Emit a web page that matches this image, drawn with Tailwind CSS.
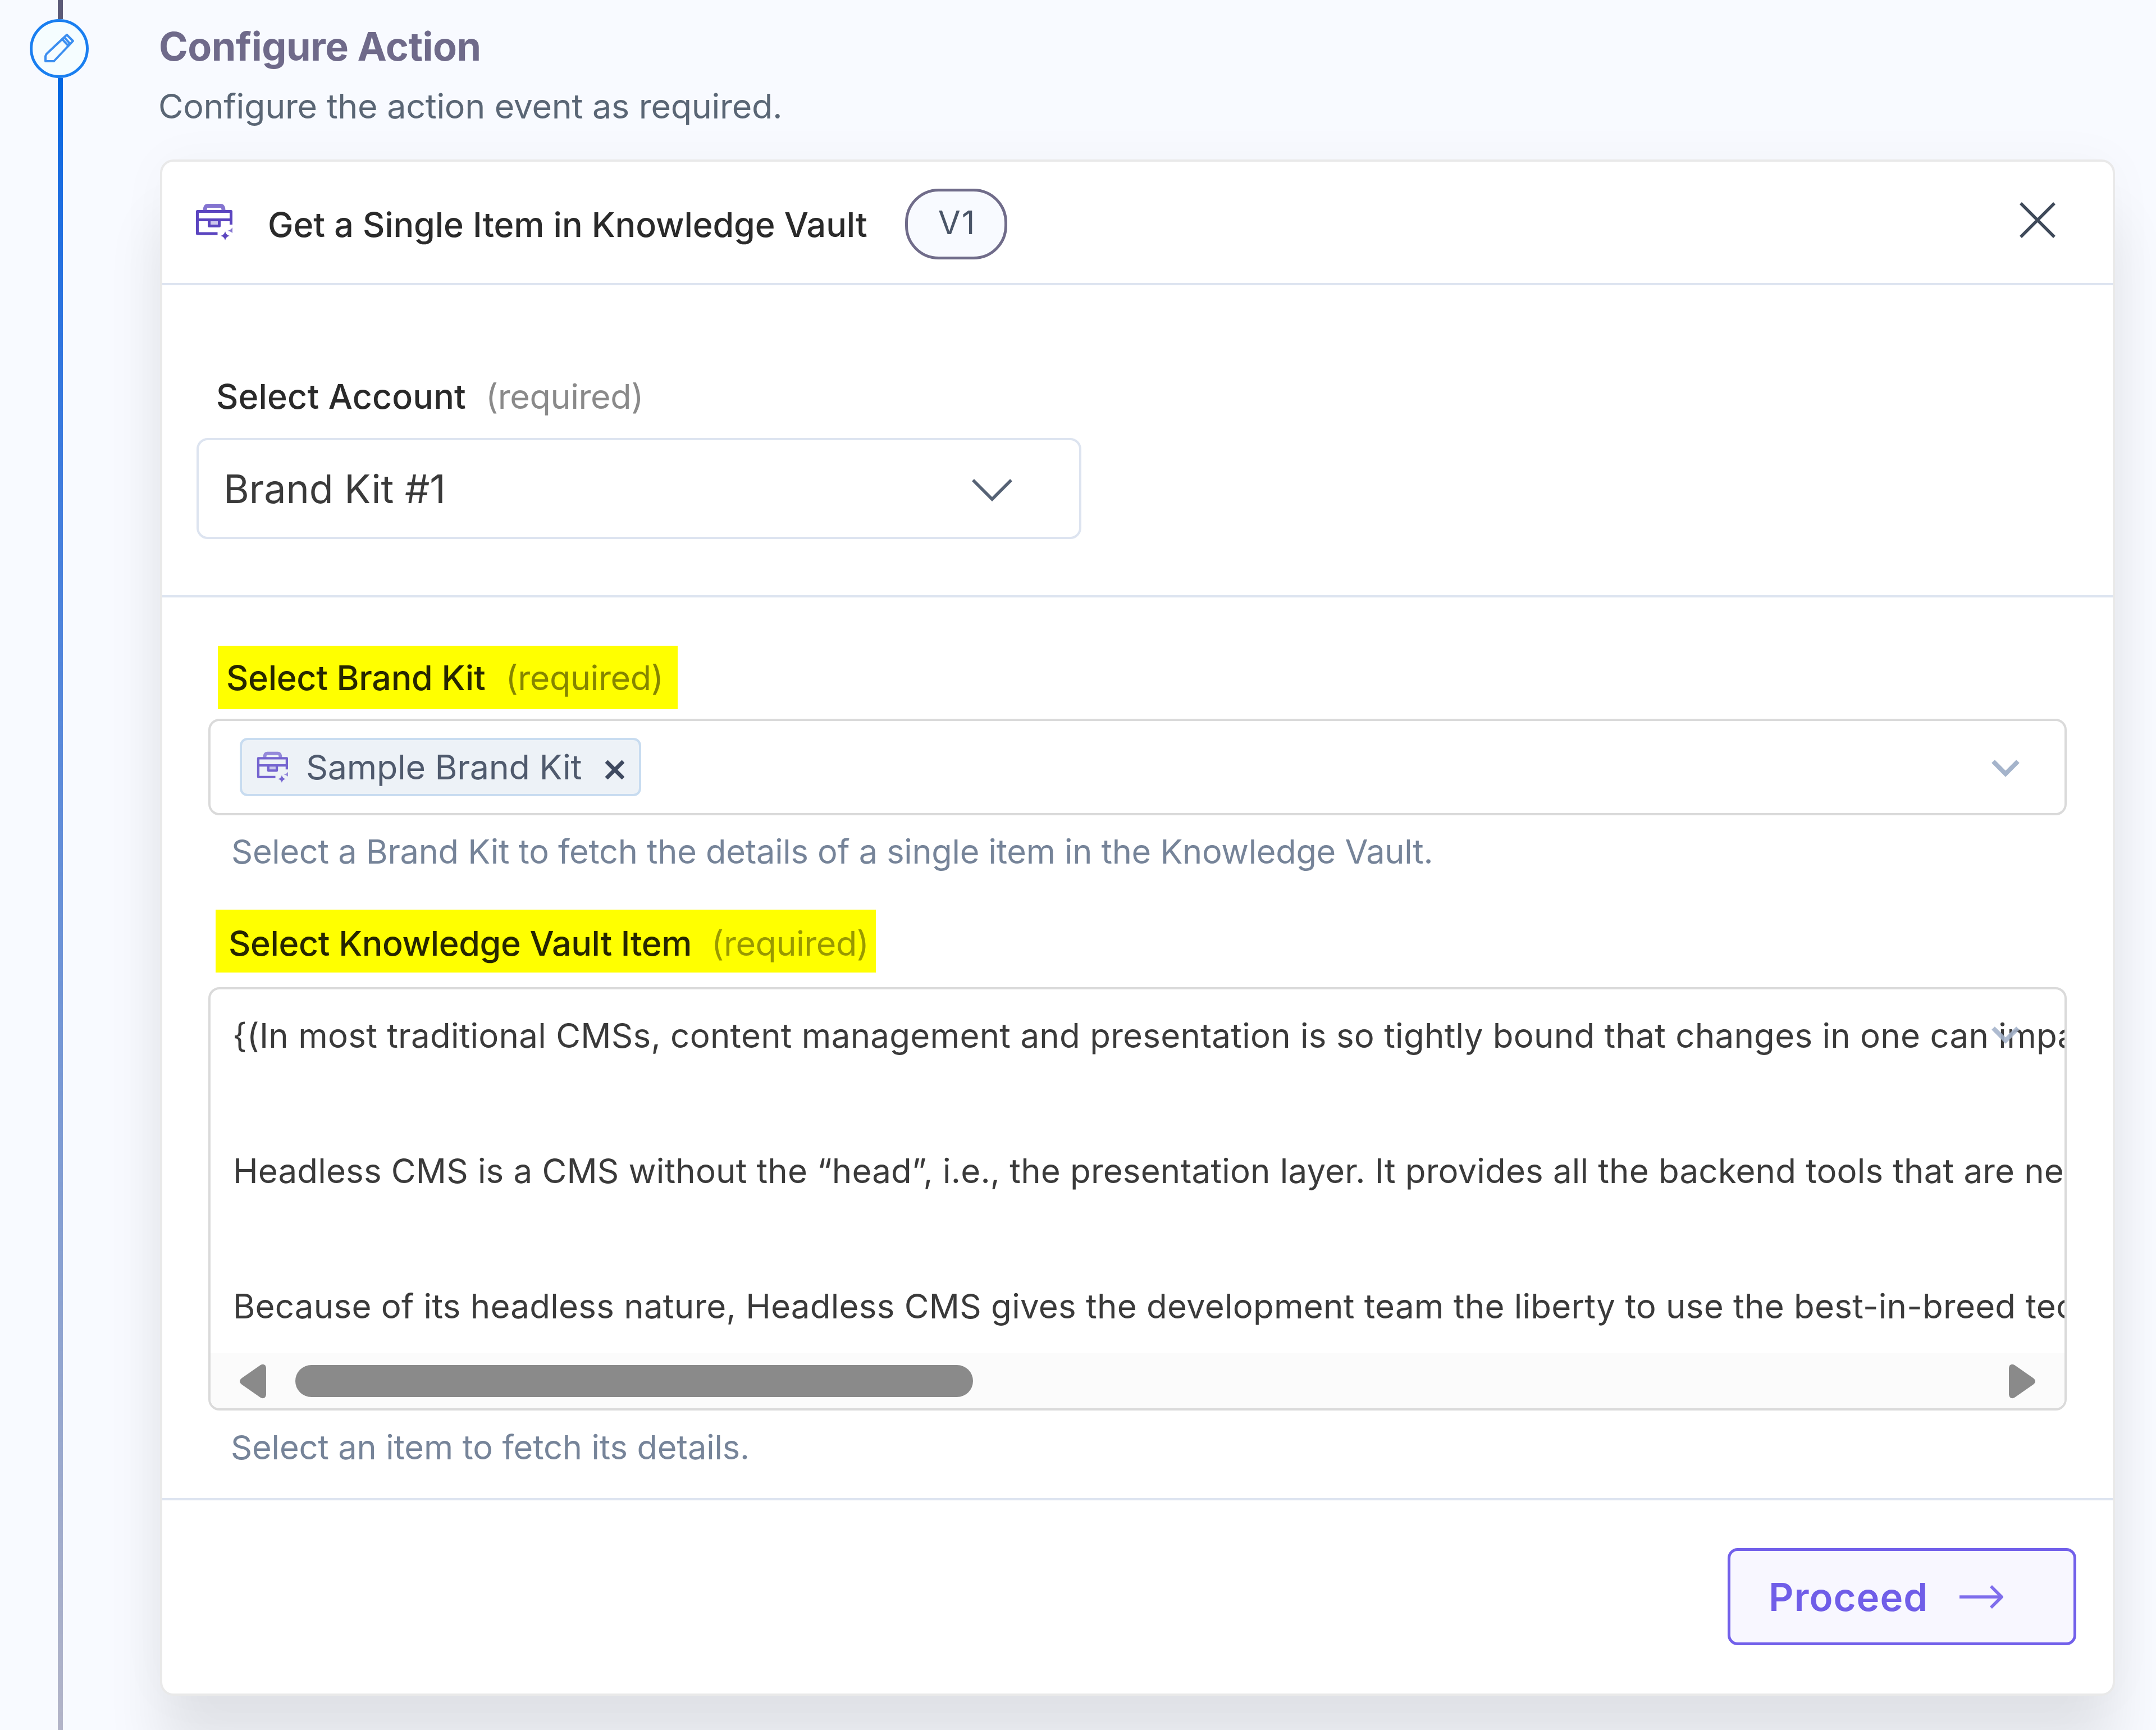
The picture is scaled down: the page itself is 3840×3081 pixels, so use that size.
<!DOCTYPE html>
<html lang="en">
<head>
  <meta charset="UTF-8">
  <meta name="viewport" content="width=device-width, initial-scale=1.0">
  <title>Configure Action</title>
  <script src="https://cdn.jsdelivr.net/npm/@tailwindcss/browser@4"></script>
</head>
<body class="bg-[#f8faff] font-['Inter',sans-serif] flex w-[3840px] h-[3081px] overflow-hidden text-[61px] leading-[76px] text-[#2a2a2a]">

  <!-- shared icons -->
  <svg class="hidden">
    <symbol id="icon-briefcase" viewBox="0 0 66 66">
      <g fill="none" stroke="currentColor" stroke-width="5" stroke-linejoin="round">
        <path d="M39.5 54H3.500V14.500H63.500V38M3.500 29.500H63.500" />
        <path d="M17 13.500Q17 4.500 22 4.500H45Q50 4.500 50 13.500" stroke-width="7" stroke-opacity=".75" />
        <path d="M24.500 31V40.500H42.500V31" fill="currentColor" fill-opacity=".3" />
      </g>
      <path d="M53 50Q54.500 56.500 61 58Q54.500 59.500 53 66Q51.500 59.500 45 58Q51.500 56.500 53 50Z" fill="currentColor" />
      <path d="M66 43V53Q63 50 57 49Q63 48 66 43Z" fill="currentColor" fill-opacity=".75" />
    </symbol>
    <symbol id="icon-chevron" viewBox="0 0 50 32">
      <path d="M3 4L25 26L47 4" fill="none" stroke="currentColor" stroke-width="8" />
    </symbol>
  </svg>

  <!-- step rail -->
  <div class="w-[281px] shrink-0 flex flex-col">
    <div class="w-[9px] h-[34px] ml-[103px] bg-[#5c5a78]"></div>
    <div class="size-[105px] ml-[53px] rounded-full border-[5px] border-[#1a7ff0] bg-[#f5fdff] flex items-center justify-center">
      <svg class="size-[56px]" viewBox="0 0 56 56" fill="none" stroke="#3c8ff0" stroke-width="4" stroke-linejoin="round">
        <path d="M41 3L52 14L18 50H3V41Q4 37 7 35Z" />
        <path d="M33 11L37 8L46 18L43 22Z" />
      </svg>
    </div>
    <div class="w-[9px] flex-1 ml-[103px] bg-linear-to-b from-[#0066e2] to-[#b3b4c8]"></div>
  </div>

  <main class="flex-1 flex flex-col">
    <h1 class="mt-[41px] ml-[2px] text-[70px] leading-[84px] font-bold tracking-[-0.5px] text-[#6f6a8a]">Configure Action</h1>
    <p class="mt-[26px] ml-[1px] tracking-[-0.3px] text-[#5a6675]">Configure the action event as required.</p>

    <section class="mt-[57px] ml-[4px] w-[3482px] h-[2736px] rounded-[24px] border-[4px] border-[#e9e9e9] bg-white bg-clip-padding shadow-[0_0_90px_rgba(0,0,0,0.03),0_110px_100px_rgba(0,0,0,0.085)]">

      <header class="h-[220px] flex items-start border-b-[4px] border-[#dde4f0]">
        <svg class="size-[66px] mt-[74px] ml-[59px] text-[#5b45c0]"><use href="#icon-briefcase" /></svg>
        <h2 class="mt-[74px] ml-[63px] font-medium tracking-[-0.08px]">Get a Single Item in Knowledge Vault</h2>
        <span class="mt-[48px] ml-[67px] w-[182px] h-[126px] rounded-[60px] border-[5px] border-[#706c8a] bg-[#f8faff] text-[58px] leading-[110px] pl-[54px] tracking-[2px] text-[#4a5568]">V1</span>
        <svg class="size-[66px] mt-[71px] ml-auto mr-[101px]" viewBox="0 0 66 66" fill="none" stroke="#3f4a5a" stroke-width="5.500">
          <path d="M3 3L63 63M63 3L3 63" />
        </svg>
      </header>

      <div class="h-[556px] pt-[160px] pl-[61px] border-b-[4px] border-[#dde4f0]">
        <label class="flex gap-[35px] ml-[35px]">
          <span class="font-medium tracking-[0.15px]">Select Account</span>
          <span class="tracking-[-0.4px] text-[#8a8a8a]">(required)</span>
        </label>
        <div class="mt-[36px] w-[1576px] h-[180px] rounded-[20px] border-[4px] border-[#dde4f0] flex items-center justify-between pl-[44px] pr-[119px]">
          <span class="mt-[2px] text-[70px] text-[#3a3a3a]">Brand Kit #1</span>
          <svg class="w-[72px] h-[42px] mt-[6px]" viewBox="0 0 72 42" fill="none" stroke="#566275" stroke-width="5.500">
            <path d="M2 3L36 37L70 3" />
          </svg>
        </div>
      </div>

      <div class="h-[1608px] pt-[86px] px-[82px] border-b-[4px] border-[#dde4f0]">
        <label class="ml-[17px] w-[819px] h-[113px] pl-[15px] flex items-center gap-[36px] bg-[#ffff00]">
          <span class="font-medium tracking-[-0.3px] text-[#262600]">Select Brand Kit</span>
          <span class="tracking-[-0.4px] text-[#858500]">(required)</span>
        </label>
        <div class="mt-[17px] h-[172px] rounded-[20px] border-[4px] border-[#dadada] flex items-center justify-between pl-[52px] pr-[80px]">
          <div class="h-[104px] w-[715px] rounded-[14px] border-[4px] border-[#c8dcf0] bg-[#edf2f7] flex items-center pl-[26px]">
            <svg class="size-[56px] text-[#7565d0]"><use href="#icon-briefcase" /></svg>
            <span class="ml-[32px] tracking-[-0.3px] text-[#4f5a6d]">Sample Brand Kit</span>
            <svg class="w-[34px] h-[34px] mt-[10px] ml-[42px]" viewBox="0 0 34 34" fill="none" stroke="#3f4a60" stroke-width="7">
              <path d="M2 2L32 32M32 2L2 32" />
            </svg>
          </div>
          <svg class="w-[50px] h-[32px] mt-[4px] text-[#a5b4cb]"><use href="#icon-chevron" /></svg>
        </div>
        <p class="mt-[26px] ml-[41px] text-[59.5px] tracking-[-0.28px] text-[#768499]">Select a Brand Kit to fetch the details of a single item in the Knowledge Vault.</p>

        <label class="mt-[66px] ml-[13px] w-[1176px] h-[112px] pl-[23px] pt-[8px] flex items-center gap-[35px] bg-[#ffff00]">
          <span class="font-medium tracking-[-0.36px] text-[#262600]">Select Knowledge Vault Item</span>
          <span class="tracking-[-0.45px] text-[#999900]">(required)</span>
        </label>
        <div class="relative mt-[26px] h-[754px] rounded-[20px] border-[4px] border-[#dadada] overflow-hidden flex flex-col">
          <div class="mt-[22px] ml-[40px] flex flex-col text-[60px] leading-[120.500px] whitespace-nowrap text-[#3a3a3a]">
            <p class="ml-[-1px] tracking-[0.26px]">{(In most traditional CMSs, content management and presentation is so tightly bound that changes in one can impa</p>
            <p class="mt-[120.500px] tracking-[0.17px]">Headless CMS is a CMS without the “head”, i.e., the presentation layer. It provides all the backend tools that are nee</p>
            <p class="mt-[120.500px] tracking-[0.25px]">Because of its headless nature, Headless CMS gives the development team the liberty to use the best-in-breed tec</p>
          </div>
          <svg class="absolute top-[65px] right-[80px] w-[50px] h-[32px] text-[#a5b4cb]/90"><use href="#icon-chevron" /></svg>
          <!-- horizontal scrollbar -->
          <div class="mt-auto h-[98px] bg-[#fbfbfb] flex items-center text-[#8a8a8a]">
            <svg class="w-[48px] h-[62px] ml-[51px] mt-[2px]" viewBox="0 0 48 62"><path d="M48 7V55Q46 64 38 60L5 37Q-3 31 5 25L38 2Q46 -2 48 7Z" fill="currentColor" /></svg>
            <div class="ml-[52px] w-[1207px] h-[57px] rounded-full bg-[#8a8a8a]"></div>
            <svg class="w-[48px] h-[62px] ml-auto mr-[51px] mt-[2px]" viewBox="0 0 48 62"><path d="M0 7V55Q2 64 10 60L43 37Q51 31 43 25L10 2Q2 -2 0 7Z" fill="currentColor" /></svg>
          </div>
        </div>
        <p class="mt-[27px] ml-[40px] text-[59.5px] tracking-[-0.12px] text-[#768499]">Select an item to fetch its details.</p>
      </div>

      <footer class="flex justify-end pt-[85px] pr-[65px]">
        <button class="w-[621px] h-[173px] rounded-[18px] border-[5px] border-[#7260ea] bg-[#f8f7ff] flex items-center pl-[68px] text-[69px] font-semibold tracking-[1px] text-[#705ee8]">
          Proceed
          <svg class="w-[78px] h-[42px] ml-[56px]" viewBox="0 0 78 42" fill="none" stroke="#7f6eec" stroke-width="5.500">
            <path d="M0 21H74M56 2L75 21L56 40" />
          </svg>
        </button>
      </footer>
    </section>
  </main>

</body>
</html>
